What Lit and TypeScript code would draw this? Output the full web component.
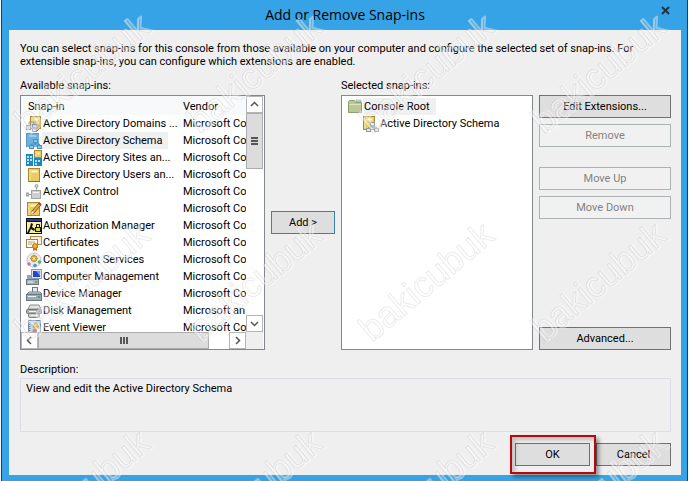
import { LitElement, html, css, svg } from "lit";
import { customElement, state } from "lit/decorators.js";
import { classMap } from "lit/directives/class-map.js";

const book = (x: number, y: number, w: number, h: number) => svg`
  <rect x=${x} y=${y} width=${w} height=${h} fill="#e9cd62" stroke="#a98a2a"/>
  <rect x=${x + 1} y=${y + 1} width="1" height=${h - 2} fill="#f8eaa8"/>
  <rect x=${x + 3} y=${y + 2} width=${w - 5} height="2" fill="#fff7cf"/>`;

const orgBoxes = (fill: string, line: string) => svg`
  <g fill=${fill} stroke=${line}>
    <path d="M9.500 9v2M5.500 13v-2h8v2" fill="none"/>
    <rect x="7.500" y="6.500" width="4" height="3"/>
    <rect x="3.500" y="12.500" width="4" height="3"/>
    <rect x="11.500" y="12.500" width="4" height="3"/>
  </g>`;

const icons: Record<string, unknown> = {
  domains: svg`${book(4.5, 0.5, 10, 12)}
    <path d="M11 8l4 3-4 4z" fill="#f0a020" stroke="#b87410"/>
    <g fill="#d5dbe6" stroke="#8592aa"><rect x=".5" y="9.500" width="4" height="4"/><rect x="6.500" y="8.500" width="4" height="3"/><rect x="6.500" y="12.500" width="4" height="3"/></g>
    <path d="M3 9V6h5v2" fill="none" stroke="#8f9bb0"/>`,
  schema: svg`<rect x="0" y="0" width="13" height="14" fill="#6fb1dd"/><rect x="3" y="2" width="7" height="2" fill="#9dcdeb"/><path d="M.5 14V.5H13" fill="none" stroke="#5697c6"/>
    ${orgBoxes("#8cc7ee", "#4a8fc4")}`,
  sites: svg`<g fill="#1f86c4"><rect x="0" y="4" width="7" height="12"/><rect x="8" y="8" width="8" height="8"/></g>
    <g fill="#b8e2f7"><path d="M1 6h2v2H1zM4 6h2v2H4zM1 9h2v2H1zM4 9h2v2H4zM1 12h2v2H1zM9 10h2v2H9zM12 10h2v2h-2zM9 13h2v2H9z"/></g>
    ${book(8.5, 0.5, 7, 7)}`,
  users: svg`${book(2.5, 1.5, 11, 13)}<path d="M3 14.500h11" stroke="#8e7220"/>`,
  activex: svg`<g fill="#cfcfcf" stroke="#a2a2a2"><rect x="5.500" y="6.500" width="9" height="8"/><path d="M10.500 6V3M5 10.500H1" fill="none"/><circle cx="10.500" cy="2" r="1.500"/><rect x=".5" y="9" width="2" height="3"/></g><path d="M7 8h6v1H7z" fill="#f4f4f4"/>`,
  adsi: svg`${book(1.5, 1.5, 12, 13)}<path d="M5 13l1-3 7-8 2 2-7 8z" fill="#e8a33c" stroke="#8b5a1c"/><path d="M5 13l1-3 2 2z" fill="#fff"/><path d="M13 2l2 2" stroke="#c33" stroke-width="2"/>`,
  auth: svg`<rect width="16" height="16" fill="#111"/><rect x="1" y="1" width="14" height="2" fill="#2b35a8"/><rect x="1" y="4" width="14" height="11" fill="#f7f19a"/>
    <path d="M5 5l2 1-1 3 3 2-1 2-3-2-2 4H1l3-6z" fill="#111"/><rect x="9.500" y="9.500" width="5" height="4" fill="#e9d82f" stroke="#111"/><path d="M10.500 9V6.500h3V9" fill="none" stroke="#111"/>`,
  certs: svg`<rect x="4.500" y="1.500" width="11" height="8" fill="#fbf0cf" stroke="#b08c4a"/><rect x=".5" y="4.500" width="11" height="8" fill="#fffaf0" stroke="#a87f45"/>
    <path d="M2 7h7M2 9h4" stroke="#b9a079"/><path d="M7 12v4l2-1 2 1v-4z" fill="#d2691e"/><circle cx="9" cy="11" r="2.500" fill="#f3ae2b" stroke="#c5761a"/>`,
  component: svg`<circle cx="8" cy="8" r="7" fill="#e8ecf0" stroke="#c0c6cc"/><circle cx="8" cy="6.500" r="3" fill="#f1c542" stroke="#b38b1d"/><path d="M8 2.500v8M4 6.500h8" stroke="#c99b22"/><circle cx="8" cy="6.500" r="1" fill="#fff"/>
    <circle cx="3" cy="12" r="1.800" fill="#c676a9"/><circle cx="9" cy="13.500" r="1.800" fill="#5a8fd0"/><circle cx="13.500" cy="10" r="1.800" fill="#5fb069"/>`,
  computer: svg`<rect x="5.500" y=".5" width="10" height="9" fill="#dfe3ea" stroke="#8e99a9"/><rect x="7" y="2" width="7" height="6" fill="#1f49c8"/><path d="M10 2h4v5z" fill="#6c9bf0"/>
    <rect x="1" y="6" width="4" height="5" fill="#93a5b5"/><rect x=".5" y="10.500" width="12" height="5" fill="#a5b3be" stroke="#667785"/><path d="M2 13h5" stroke="#edf3f7"/><rect x="9" y="12" width="2" height="2" fill="#65a95a"/>`,
  device: svg`<rect x="6.500" y="1.500" width="5" height="7" fill="#e5e8ea" stroke="#687781"/><path d="M1 8l2-2h11l2 2z" fill="#cbd2d6" stroke="#75838c"/><rect x=".5" y="8.500" width="15" height="6" fill="#9cabb3" stroke="#687983"/><rect x="2" y="10" width="8" height="1" fill="#eef3f5"/><rect x="12" y="10" width="2" height="2" fill="#5ba457"/>`,
  disk: svg`<path d="M2 6l2-4h9l2 4z" fill="#e4e4e4" stroke="#8b8b8b"/><rect x=".5" y="6.500" width="15" height="4" rx="1" fill="#a9a9a9" stroke="#777"/><rect x="2.500" y="10.500" width="11" height="4" rx="1" fill="#c9c9c9" stroke="#808080"/><path d="M3 8.500h7M5 12.500h6" stroke="#f5f5f5"/><rect x="12" y="8" width="2" height="1" fill="#59a84f"/>`,
  events: svg`<rect x="2.500" y=".5" width="12" height="15" fill="#c4d7ee" stroke="#6b89b1"/><path d="M3.500 2v13" stroke="#7b8794" stroke-dasharray="1 1" stroke-width="2"/><path d="M10 2l3 5H7z" fill="#f4cd35" stroke="#b58f18"/><circle cx="9" cy="11" r="2.500" fill="#d98a56"/><rect x="11" y="9" width="3" height="4" fill="#f5f8fc"/>`,
  folder: svg`<path d="M1.500 13.500v-11l1-1h5l1 2h6v10z" fill="#bcc798" stroke="#8f9b70"/><path d="M2 5.500h12" stroke="#dce4bd"/><rect x="9" y="1" width="5" height="2" fill="#b8d8e0" stroke="#88a28c" stroke-width=".5"/>`,
  schemaBook: svg`${book(0.5, 0.5, 11, 13)}${orgBoxes("#e5e8ea", "#8f989f")}`,
};

const icon = (name: string) =>
  html`<svg class="icon" viewBox="0 0 16 16" width="16" height="16" aria-hidden="true">${icons[name]}</svg>`;

const chevron = (d: string) =>
  html`<svg viewBox="0 0 9 9" width="9" height="9" aria-hidden="true"><path d=${d} fill="none" stroke="#555" stroke-width="1.500"/></svg>`;

const snapins = [
  ["domains", "Active Directory Domains ...", "Microsoft Co"],
  ["schema", "Active Directory Schema", "Microsoft Co"],
  ["sites", "Active Directory Sites an...", "Microsoft Co"],
  ["users", "Active Directory Users an...", "Microsoft Co"],
  ["activex", "ActiveX Control", "Microsoft Co"],
  ["adsi", "ADSI Edit", "Microsoft Co"],
  ["auth", "Authorization Manager", "Microsoft Co"],
  ["certs", "Certificates", "Microsoft Co"],
  ["component", "Component Services", "Microsoft Co"],
  ["computer", "Computer Management", "Microsoft Co"],
  ["device", "Device Manager", "Microsoft Co"],
  ["disk", "Disk Management", "Microsoft an"],
  ["events", "Event Viewer", "Microsoft Co"],
];

@customElement("snap-watermark")
export class SnapWatermark extends LitElement {
  static styles = css`
    :host { position: absolute; inset: 0; pointer-events: none; overflow: hidden; }
    svg { display: block; width: 100%; height: 100%; }
    text { font: 36px "Liberation Sans", Arial, sans-serif; fill: none; stroke-linejoin: round; }
    .light { stroke: #fff; stroke-width: 2px; stroke-opacity: 0.4; }
    .fill { fill: #fff; fill-opacity: 0.12; stroke: #777; stroke-width: 1px; stroke-opacity: 0.15; }
  `;
  render() {
    return html`<svg aria-hidden="true">
      <defs>
        <pattern id="mark" x="5" y="8" width="172" height="208" patternUnits="userSpaceOnUse">
          <g transform="translate(23 127) rotate(-40)">
            <text class="light" x="1" y="1">bakicubuk</text>
            <text class="fill">bakicubuk</text>
          </g>
        </pattern>
      </defs>
      <rect width="100%" height="100%" fill="url(#mark)"/>
    </svg>`;
  }
}

@customElement("app-root")
export class AppRoot extends LitElement {
  static styles = css`
    :host { display: block; position: relative; overflow: hidden; background: #f4f6f8; padding: 0 1px; font: 11px/13px Roboto, Tahoma, sans-serif; color: #000; }
    * { box-sizing: border-box; }
    .dialog { background: #36a3e6; border: solid #1c3f57; border-width: 0 1px; padding: 0 6px 6px 7px; min-height: 100vh; display: flex; flex-direction: column; }
    .title { height: 30px; display: grid; grid-template-columns: 32px 1fr 32px; align-items: center; }
    h1 { margin: 0; grid-column: 2; text-align: center; font: 14px/20px "Open Sans", "Noto Sans", sans-serif; }
    .close { border: 0; background: none; justify-self: center; align-self: start; width: 20px; height: 20px; padding: 0; display: grid; place-items: center; }
    .body { flex: 1; background: #efefef; padding: 12px 10px 9px 11px; display: flex; flex-direction: column; }
    p { margin: 0; }
    .columns { display: grid; grid-template-columns: minmax(0, 245fr) 64px minmax(0, 192fr) 132px; column-gap: 6px; row-gap: 2px; margin-top: 11px; }
    .label { line-height: 14px; }
    .selected-label { grid-column: 3 / 5; }
    .box { background: #fff; border: 1px solid #828790; height: 255px; min-width: 0; }
    button { font: inherit; color: #000; }
    .btn { height: 23px; width: 100%; background: #dedede; border: 1px solid #707070; padding: 0; }
    .btn:disabled { background: #f1f1f1; color: #838383; border-color: #adb2b5; }
    .btn.focus { border-color: #3c7fb1; }
    .middle { align-self: center; }
    .actions { display: flex; flex-direction: column; gap: 6px; }
    .group { margin-top: 14px; }
    .bottom { margin-top: auto; }

    .available { display: grid; grid-template-columns: minmax(0, 1fr) 17px; grid-template-rows: 236px 17px; padding-right: 1px; }
    .viewport { overflow: hidden; }
    table { border-collapse: collapse; table-layout: fixed; width: 100%; }
    .name-col { width: 72%; }
    th, td { height: 17px; padding: 0; text-align: left; font-weight: normal; white-space: nowrap; }
    th { height: 19px; background: #f7f9fb; padding-left: 7px; padding-top: 2px; }
    th + th { padding-left: 0; }
    .item { display: flex; align-items: center; height: 17px; padding-left: 5px; }
    .icon { flex: none; display: block; }
    .text { display: block; line-height: 17px; padding: 0 6px 0 1px; }
    .chosen .text { background: #f0f0f0; }
    .scroll { display: flex; background: #fff; }
    .vertical { flex-direction: column; }
    .arrow { width: 17px; height: 17px; flex: none; padding: 0; background: #fff; border: 1px solid #b5b5b5; display: grid; place-items: center; }
    .thumb { background: #dcdcdc; border: 1px solid #adadad; display: grid; place-items: center; }
    .vertical .thumb { height: 56px; }
    .horizontal .thumb { flex: 1; margin-right: 20px; }
    .vertical .arrow:last-child { margin-top: auto; }
    .corner { background: #efefef; }

    ul { list-style: none; margin: 0; padding: 2px 0 0; }
    ul ul { padding: 0 0 0 16px; }
    .desc-label { margin-top: 13px; }
    .desc { margin-top: 2px; height: 54px; border: 1px solid #dcdde6; padding: 3px 5px; }
    .footer { display: flex; justify-content: flex-end; gap: 6px; margin-top: auto; }
    .footer .btn { width: 75px; }
    .ok { position: relative; }
    .ok::after { content: ""; position: absolute; inset: -8px -6px -8px -5px; border: 2px solid #b8080d; box-shadow: 3px 3px 4px #0006, inset 3px 3px 4px #0003; pointer-events: none; }
  `;

  @state() private current = "schema";

  private available() {
    return html`
      <div class="box available">
        <div class="viewport">
          <table aria-labelledby="available-label">
            <colgroup><col class="name-col"><col></colgroup>
            <thead><tr><th scope="col">Snap-in</th><th scope="col">Vendor</th></tr></thead>
            <tbody>
              ${snapins.map(([id, name, vendor]) => html`
                <tr class=${classMap({ chosen: id === this.current })} @click=${() => (this.current = id)}>
                  <td><div class="item">${icon(id)}<span class="text">${name}</span></div></td>
                  <td>${vendor}</td>
                </tr>`)}
            </tbody>
          </table>
        </div>
        <div class="scroll vertical">
          <button class="arrow" aria-label="Scroll up">${chevron("M1 6l3.500-3.500L8 6")}</button>
          <div class="thumb"><svg width="7" height="8" aria-hidden="true"><path d="M0 1h7M0 4h7M0 7h7" stroke="#555" stroke-width="2"/></svg></div>
          <button class="arrow" aria-label="Scroll down">${chevron("M1 3l3.500 3.500L8 3")}</button>
        </div>
        <div class="scroll horizontal">
          <button class="arrow" aria-label="Scroll left">${chevron("M6 1L2.500 4.500 6 8")}</button>
          <div class="thumb"><svg width="8" height="7" aria-hidden="true"><path d="M1 0v7M4 0v7M7 0v7" stroke="#555" stroke-width="2"/></svg></div>
          <button class="arrow" aria-label="Scroll right">${chevron("M3 1l3.500 3.500L3 8")}</button>
        </div>
        <div class="corner"></div>
      </div>`;
  }

  render() {
    return html`
      <div class="dialog" role="dialog" aria-labelledby="title">
        <header class="title">
          <h1 id="title">Add or Remove Snap-ins</h1>
          <button class="close" aria-label="Close"><svg width="9" height="9" viewBox="0 0 9 9" aria-hidden="true"><path d="M1 1l7 7M8 1L1 8" stroke="#1c3446" stroke-width="2"/></svg></button>
        </header>
        <main class="body">
          <p>You can select snap-ins for this console from those available on your computer and configure the selected set of snap-ins. For extensible snap-ins, you can configure which extensions are enabled.</p>
          <div class="columns">
            <div class="label" id="available-label">Available snap-ins:</div>
            <div class="label selected-label" id="selected-label">Selected snap-ins:</div>
            ${this.available()}
            <div class="middle"><button class="btn focus">Add &gt;</button></div>
            <div class="box">
              <ul aria-labelledby="selected-label">
                <li>
                  <div class="item chosen">${icon("folder")}<span class="text">Console Root</span></div>
                  <ul><li><div class="item">${icon("schemaBook")}<span class="text">Active Directory Schema</span></div></li></ul>
                </li>
              </ul>
            </div>
            <div class="actions">
              <button class="btn">Edit Extensions...</button>
              <button class="btn" disabled>Remove</button>
              <button class="btn group" disabled>Move Up</button>
              <button class="btn" disabled>Move Down</button>
              <button class="btn bottom">Advanced...</button>
            </div>
          </div>
          <div class="desc-label" id="desc-label">Description:</div>
          <div class="desc" aria-labelledby="desc-label">View and edit the Active Directory Schema</div>
          <footer class="footer">
            <div class="ok"><button class="btn">OK</button></div>
            <button class="btn">Cancel</button>
          </footer>
        </main>
      </div>
      <snap-watermark></snap-watermark>`;
  }
}
